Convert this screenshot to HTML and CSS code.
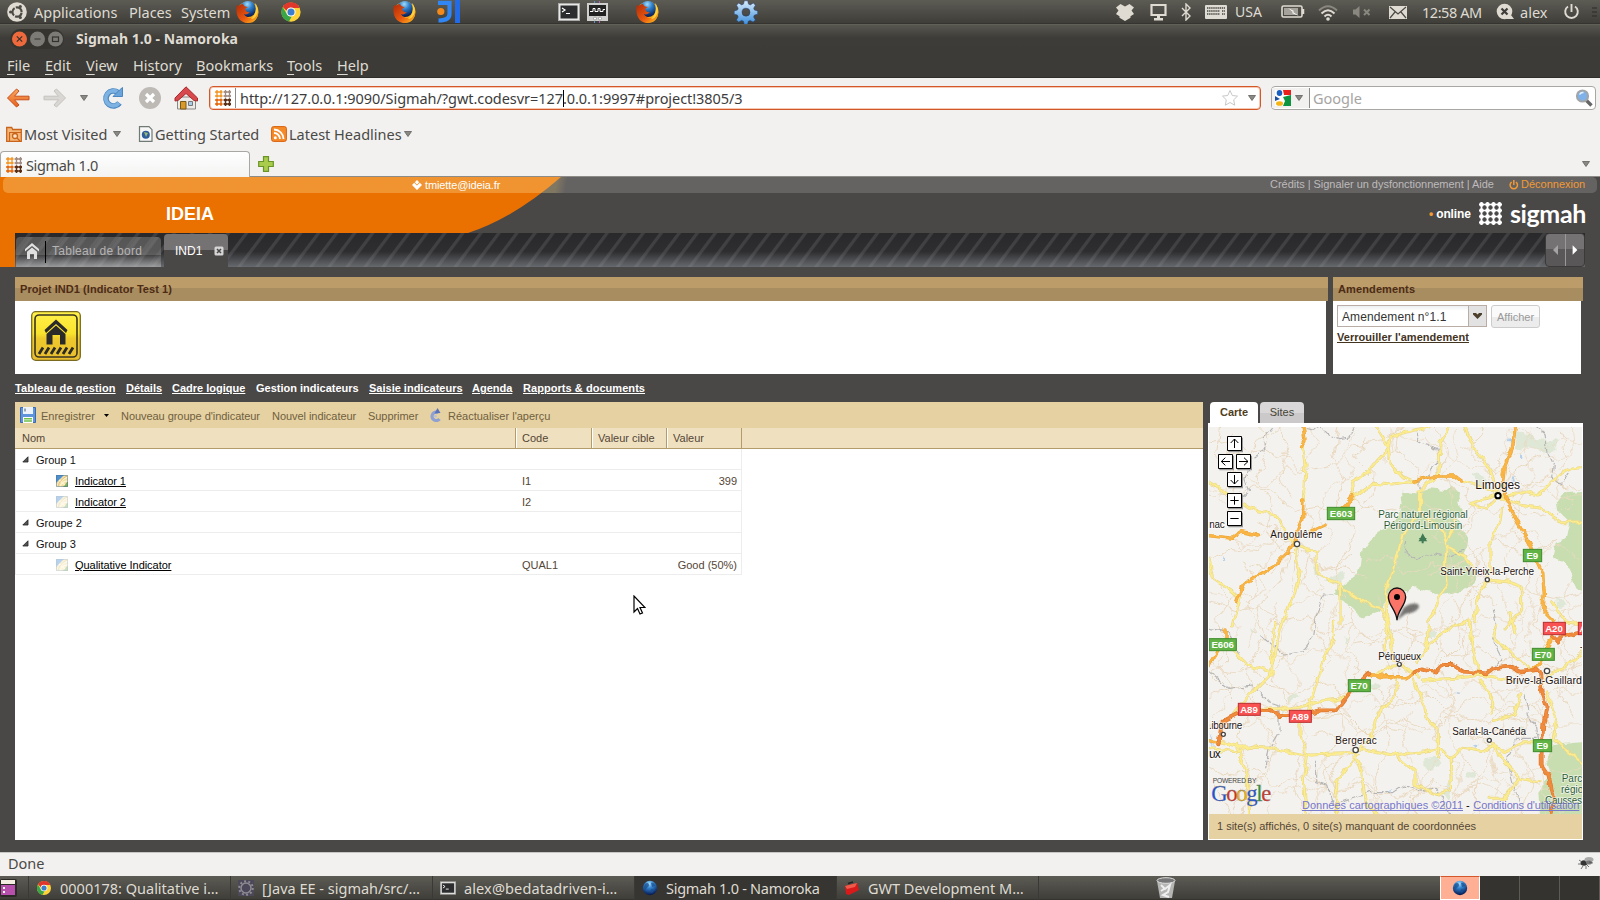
FILE: index.html
```html
<!DOCTYPE html>
<html lang="fr">
<head>
<meta charset="utf-8">
<title>Sigmah 1.0 - Namoroka</title>
<link rel="stylesheet" href="styles.css">
</head>
<body>
<svg class="defs" width="0" height="0">
  <defs>
    <radialGradient id="gBlue" cx=".45" cy=".2" r=".8"><stop offset="0" stop-color="#9fdcff"/><stop offset=".4" stop-color="#2f7fc9"/><stop offset="1" stop-color="#06164e"/></radialGradient>
    <linearGradient id="gFox" x1="0" y1="0" x2="1" y2="1"><stop offset="0" stop-color="#b02a08"/><stop offset=".55" stop-color="#e8560f"/><stop offset="1" stop-color="#ffc21e"/></linearGradient>
    <linearGradient id="gArrow" x1="0" y1="0" x2="0" y2="1"><stop offset="0" stop-color="#f8a860"/><stop offset="1" stop-color="#e8601c"/></linearGradient>
    <linearGradient id="gSign" x1="0" y1="0" x2="0" y2="1"><stop offset="0" stop-color="#fff04a"/><stop offset=".45" stop-color="#fae32c"/><stop offset=".55" stop-color="#eec92c"/><stop offset="1" stop-color="#e9bd2e"/></linearGradient>
    <linearGradient id="gGear" x1="0" y1="0" x2="0" y2="1"><stop offset="0" stop-color="#d9ecfb"/><stop offset="1" stop-color="#3d8fdc"/></linearGradient>
    <filter id="wiggle" filterUnits="userSpaceOnUse" x="0" y="60" width="1180" height="1230"><feTurbulence type="fractalNoise" baseFrequency=".02" numOctaves="3" seed="4" result="n"/><feDisplacementMap in="SourceGraphic" in2="n" scale="44" xChannelSelector="R" yChannelSelector="G"/></filter>
    <filter id="wiggleSoft" filterUnits="userSpaceOnUse" x="0" y="60" width="1180" height="1230"><feTurbulence type="fractalNoise" baseFrequency=".035" numOctaves="2" seed="9" result="n"/><feDisplacementMap in="SourceGraphic" in2="n" scale="20" xChannelSelector="R" yChannelSelector="G"/></filter>
    <filter id="soft" x="-20%" y="-60%" width="140%" height="220%"><feGaussianBlur stdDeviation="3"/></filter>
  </defs>
  <symbol id="fox" viewBox="0 0 24 24">
    <circle cx="13" cy="12" r="10.6" fill="#f8a91c"/>
    <circle cx="13" cy="9" r="8" fill="url(#gBlue)"/>
    <path d="M2 5c-2 8 1 18 11 18 6 0 10-4 10-10-1 3-4 5-7 5-4 0-6-2-7-4 2 1 4 0 6-2-3 1-4-1-5-3l3-2C10 7 9 6 8 4 6 4 5 5 4 6z" fill="url(#gFox)"/>
    <path d="M20 3c3 3 4 9 1 13-1 2-3 3-5 3 4-3 6-9 4-16z" fill="#ffd23c"/>
  </symbol>
  <symbol id="chrome" viewBox="0 0 24 24">
    <circle cx="12" cy="12" r="10.5" fill="#ffd338"/>
    <path d="M3 6.500A10.500 10.500 0 0 1 21.500 7.500H12a5 5 0 0 0-4.700 3.200z" fill="#e0362c"/>
    <path d="M2.900 6.600 7.600 14.500a5 5 0 0 0 5.200 2.400L9.800 22.300A10.500 10.500 0 0 1 2.900 6.600z" fill="#3aa648"/>
    <circle cx="12" cy="12" r="5" fill="#fff"/><circle cx="12" cy="12" r="3.900" fill="#3b7ed0"/>
  </symbol>
  <symbol id="term" viewBox="0 0 22 18">
    <rect x=".5" y=".5" width="21" height="17" fill="#e8e8e6" stroke="#aaa"/>
    <rect x="2.500" y="2.500" width="17" height="13" fill="#2b2d2e"/>
    <path d="M4 5l3 2-3 2M8 10.500h4" stroke="#fff" stroke-width="1.200" fill="none"/>
  </symbol>
  <symbol id="globe" viewBox="0 0 16 16">
    <circle cx="8" cy="8" r="7.200" fill="url(#gBlue)"/>
    <path d="M3 4c2-2 4-1 4 1s-2 2-3 4-2-1-2-2zM9 3c2-1 4 1 4 3l-3 1zM9 9c2 0 3 1 2 3s-2 1-2-1z" fill="#1b4f8f" opacity=".75"/>
  </symbol>
  <symbol id="down" viewBox="0 0 8 6"><path d="M.5.5h7L4 5.500z" fill="#8a8984" stroke="#5f5e5a" stroke-width=".8"/></symbol>
  <symbol id="sig" viewBox="0 0 16 16">
    <g stroke-width="1.300" fill="none">
      <path d="M0 2h7.500M0 6h7.500M2 0v7.500M6 0v7.500" stroke="#f39a2c"/>
      <path d="M8.500 2H16M8.500 6H16M10.500 0v7.500M14.500 0v7.500" stroke="#a08a80"/>
      <path d="M0 10h7.500M0 14h7.500M2 8.500V16M6 8.500V16" stroke="#e56a10"/>
      <path d="M8.500 10H16M8.500 14H16M10.500 8.500V16M14.500 8.500V16" stroke="#5a2c14"/>
    </g>
    <g fill="#f39a2c"><circle cx="2" cy="2" r="1.300"/><circle cx="6" cy="2" r="1.300"/><circle cx="2" cy="6" r="1.300"/><circle cx="6" cy="6" r="1.300"/></g>
    <g fill="#a08a80"><circle cx="10.500" cy="2" r="1.200"/><circle cx="14.500" cy="2" r="1.200"/><circle cx="10.500" cy="6" r="1.200"/><circle cx="14.500" cy="6" r="1.200"/></g>
    <g fill="#e56a10"><circle cx="2" cy="10" r="1.300"/><circle cx="6" cy="10" r="1.300"/><circle cx="2" cy="14" r="1.300"/><circle cx="6" cy="14" r="1.300"/></g>
    <g fill="#5a2c14"><circle cx="10.500" cy="10" r="1.500"/><circle cx="14.500" cy="10" r="1.500"/><circle cx="10.500" cy="14" r="1.500"/><circle cx="14.500" cy="14" r="1.500"/></g>
  </symbol>
  <symbol id="site" viewBox="0 0 12 12">
    <rect width="12" height="12" fill="#f0dfa0"/><path d="M0 0h8L0 8z" fill="#4f8fd0"/><path d="M12 6v6H7z" fill="#7fb05a"/>
    <path d="M1 12C2 8 6 4 12 2M4 12c1-4 4-6 8-6M3 5l6 5" fill="none" stroke="#fdf3cf" stroke-width="1.300"/><path d="M2 11C3 7 6 4 11 1" fill="none" stroke="#d9a860" stroke-width=".7"/><path d="M.5.5h11v11H.5z" fill="none" stroke="#4a7090" stroke-width=".7" opacity=".7"/>
  </symbol>
  <symbol id="house" viewBox="0 0 14 16"><path d="M0 8.500V6l7-6 7 6v2.500L7 3z"/><path d="M2 8.800 7 4.600l5 4.200V16H9v-5H5v5H2z"/></symbol>
  <symbol id="twist" viewBox="0 0 7 7"><path d="M6 .8V6H.8z" fill="#555" stroke="#222" stroke-width=".8"/></symbol>
</svg>

<header class="panel">
  <svg class="i20" viewBox="0 0 20 20"><circle cx="10" cy="10" r="9.800" fill="#dfdbd2"/><circle cx="10" cy="10" r="4.600" fill="none" stroke="#4b4a45" stroke-width="2.200" stroke-dasharray="8.400 1.230" stroke-dashoffset="-.6"/><g fill="#4b4a45"><circle cx="3.600" cy="10" r="1.600"/><circle cx="13.300" cy="4.500" r="1.600"/><circle cx="13.300" cy="15.500" r="1.600"/></g></svg>
  <span>Applications</span><span>Places</span><span>System</span>
  <svg class="i24"><use href="#fox"/></svg>
  <svg class="i22"><use href="#chrome"/></svg>
  <svg class="i24"><use href="#fox"/></svg>
  <svg class="i24" viewBox="0 0 24 24"><circle cx="3.800" cy="11.500" r="3.600" fill="#f58a1c"/><path d="M1 2.800h11.500V14c0 4.500-4 6.500-11 6.500" fill="none" stroke="#2f86f4" stroke-width="4.200"/><path d="M20.500 0v23" stroke="#1f6bea" stroke-width="5"/></svg>
  <svg class="term"><use href="#term"/></svg>
  <svg class="i24" viewBox="0 0 24 24"><path d="M8.500 1v22" stroke="#5a90d0"/><path d="M13.500 1v22" stroke="#a860b0"/><rect x="1" y="3" width="21" height="18" fill="#cfcfcd"/><rect x="3" y="5" width="17" height="11" fill="#222"/><path d="M4 11.500h3v-3h2v3h3v-3h2v3h3v-2h2" stroke="#fff" fill="none"/><circle cx="9" cy="18.500" r="1.500" fill="#fff" stroke="#666" stroke-width=".5"/><circle cx="14" cy="18.500" r="1.500" fill="#fff" stroke="#666" stroke-width=".5"/></svg>
  <svg class="i24"><use href="#fox"/></svg>
  <svg class="i24" viewBox="0 0 24 24"><path d="M10.300.8h3.400l.8 3.300 1.800.8 3-1.900 2.100 2.200-1.700 3 .8 1.900 3.200.8v3.300l-3.200.8-.9 2 1.800 2.900-2.300 2.200-2.900-1.700-1.900.8-.7 3.100h-3.400l-.7-3.100-1.900-.8-2.900 1.700-2.300-2.200L4.200 17l-.9-2-3.100-.8v-3.300l3.200-.8.8-1.900-1.700-3 2.200-2.200 3 1.900 1.800-.8zM12 8.200a4 4 0 1 0 0 8 4 4 0 0 0 0-8z" fill="url(#gGear)" fill-rule="evenodd" stroke="#1e3f78" stroke-width=".5"/></svg>
  <svg class="i20" viewBox="0 0 20 20"><path d="M5.500 2 10 4.500 14.500 2 19 5.500 16.500 8.500 19 12l-3.500 2.200v1.600L10 19l-5.500-3.200v-1.600L1 12l2.500-3.500L1 5.500z" fill="#dfdbd2"/></svg>
  <svg class="i20" viewBox="0 0 20 20"><path d="M2.500 3h14v10h-14z" fill="none" stroke="#dfdbd2" stroke-width="2.200"/><path d="M8 14h3v2h3v2.500H5V16h3z" fill="#dfdbd2"/></svg>
  <svg class="bt" viewBox="0 0 12 18"><path d="M2 5l8 8-4 4V1l4 4-8 8" fill="none" stroke="#dfdbd2" stroke-width="1.400"/></svg>
  <svg class="kb" viewBox="0 0 22 14"><rect width="22" height="14" rx="1" fill="#dedbd5"/><path d="M2 3h18M2 6h13M2 9h13M17 6h3M17 9h3" stroke="#6a6862" stroke-width="1.800" stroke-dasharray="1.400 .7"/></svg>
  <span class="usa">USA</span>
  <svg class="bat" viewBox="0 0 24 14"><rect x="1" y="1" width="20" height="11" rx="1.500" fill="none" stroke="#dfdbd2" stroke-width="1.600"/><path d="M22 4v5" stroke="#dfdbd2" stroke-width="2.500"/><path d="M3 3h14v7H3z" fill="#a5a29b"/><path d="M7 3l6 3-1 1 6 4-7-3 1-1z" fill="#fff"/></svg>
  <svg class="i20" viewBox="0 0 20 20"><g fill="none" stroke-width="2"><path d="M1 8.500Q10 0 19 8.500" stroke="#8a8780"/><path d="M3.500 11.500Q10 5 16.500 11.500M6.500 14.500Q10 11 13.500 14.500" stroke="#dfdbd2"/></g><circle cx="10" cy="17" r="1.800" fill="#dfdbd2"/></svg>
  <svg class="i18" viewBox="0 0 18 18"><path d="M0 6.500h2.500L6.500 3v12l-4-3.500H0z" fill="#8a8780"/><path d="M11 6.500l5.500 5.500M16.500 6.500L11 12" stroke="#8a8780" stroke-width="2"/></svg>
  <svg class="mail" viewBox="0 0 18 13"><rect width="18" height="13" fill="#dfdbd2"/><path d="M1 1l8 7 8-7M1 12l5-6M17 12l-5-6" fill="none" stroke="#4b4a45" stroke-width="1.200"/></svg>
  <span class="clock">12:58 AM</span>
  <svg class="i18" viewBox="0 0 18 18"><circle cx="8.500" cy="8.500" r="7.800" fill="#dfdbd2"/><path d="M10 16h8l-3-4z" fill="#dfdbd2"/><path d="M5.500 5.500l6 6M11.500 5.500l-6 6" stroke="#3f3e3a" stroke-width="2.200"/></svg>
  <span>alex</span>
  <svg class="i18" viewBox="0 0 18 18"><path d="M5 3.500a6.300 6.300 0 1 0 7 0M8.500 1v8" fill="none" stroke="#dfdbd2" stroke-width="1.900"/></svg>
  <svg class="grip" viewBox="0 0 5 10"><path d="M0 1h5M0 5h5M0 9h5" stroke="#2c2b28"/></svg>
</header>

<div class="titlebar">
  <svg class="wbtns" viewBox="0 0 54 20"><rect x="0" y="0" width="54" height="20" rx="10" fill="#35342f"/><circle cx="9.500" cy="10" r="7.500" fill="#ee6a3c"/><circle cx="27.500" cy="10" r="7.500" fill="#7c7b75"/><circle cx="45.500" cy="10" r="7.500" fill="#7c7b75"/><g fill="none" stroke="#33322e" stroke-width="1.200"><path d="M6.800 7.300l5.400 5.400M12.200 7.300l-5.400 5.400M24.500 10h6"/><rect x="42.500" y="8" width="6" height="4.500"/></g></svg>
  <span>Sigmah 1.0 - Namoroka</span>
</div>
<nav class="menubar"><span><u>F</u>ile</span><span><u>E</u>dit</span><span><u>V</u>iew</span><span>Hi<u>s</u>tory</span><span><u>B</u>ookmarks</span><span><u>T</u>ools</span><span><u>H</u>elp</span></nav>

<div class="navbar">
  <svg class="i24" viewBox="0 0 24 24"><path d="M1.500 12 10.500 3l2.500 2-4.500 5.200H23v3.600H8.500L13 19l-2.500 2z" fill="url(#gArrow)" stroke="#c8501a" stroke-linejoin="round"/></svg>
  <svg class="i24" viewBox="0 0 24 24"><path d="M22.500 12 13.500 3 11 5l4.500 5.200H1v3.600h14.500L11 19l2.500 2z" fill="#d9d7d3" stroke="#c6c3be" stroke-linejoin="round"/></svg>
  <svg class="dn"><use href="#down"/></svg>
  <svg class="i24" viewBox="0 0 24 24"><path d="M17 6.500A7.500 7.500 0 1 0 18.500 17" fill="none" stroke="#4a86c0" stroke-width="5.600"/><path d="M17 6.500A7.500 7.500 0 1 0 18 17" fill="none" stroke="#7db2e2" stroke-width="3.800"/><path d="M12 10.500h9.500V1.500l-3 2.500z" fill="#6ba4da" stroke="#4a86c0"/></svg>
  <svg class="i24" viewBox="0 0 24 24"><circle cx="12" cy="12" r="11" fill="#bdbab6"/><path d="M8 8l8 8M16 8l-8 8" stroke="#fff" stroke-width="3.200"/></svg>
  <svg class="i24" viewBox="0 0 24 24"><path d="M3.500 11h18v12h-18z" fill="#ecebe8" stroke="#8a8884"/><path d="M12 .8 1 12v3l3-.5 8-7 8 7 3.500.5v-3z" fill="#d8484c" stroke="#a52a2c"/><path d="M6.500 15.500h5.500V23H6.500z" fill="#d99a2a" stroke="#7a5a1a"/><path d="M14.500 15.500h4v4h-4z" fill="#a9cce8" stroke="#777"/></svg>
  <div class="urlbar">
    <svg class="i16"><use href="#sig"/></svg><i class="vsep"></i>
    <span class="url">http://127.0.0.1:9090/Sigmah/?gwt.codesvr=127<i class="caret"></i>.0.0.1:9997#project!3805/3</span>
    <svg class="i18 star" viewBox="0 0 18 18"><path d="M9 1.500l2.300 5 5.200.6-3.800 3.700 1 5.400L9 13.500l-4.700 2.700 1-5.400L1.500 7.100l5.200-.6z" fill="#fff" stroke="#c8c8c8"/></svg>
    <svg class="dn"><use href="#down"/></svg>
  </div>
  <div class="search">
    <div class="engine">
      <svg class="i16" viewBox="0 0 16 16"><rect width="16" height="16" fill="#fff"/><path d="M8 0h8v5H9z" fill="#e8211d"/><path d="M16 5v11H8l2-5-2-4z" fill="#0d9440"/><ellipse cx="4.500" cy="3" rx="2.800" ry="3" fill="#1a60c0"/><path d="M0 6l5 3-5 2z" fill="#1c4fa0"/><ellipse cx="4.500" cy="13.500" rx="3.500" ry="2.300" fill="#f5b414"/></svg>
      <svg class="dn"><use href="#down"/></svg>
    </div>
    <span>Google</span>
    <svg class="i18" viewBox="0 0 18 18"><path d="M11 11l5.500 5.500" stroke="#666" stroke-width="3.400"/><circle cx="7.500" cy="7" r="5.600" fill="#7fb2e8" stroke="#a3a6a8" stroke-width="2"/><path d="M4.500 5.500a4 4 0 0 1 4-2" stroke="#e5f2ff" stroke-width="1.500" fill="none"/></svg>
  </div>
</div>

<div class="bookmarks">
  <svg class="i16" viewBox="0 0 16 16"><path d="M.7 1.500h5l1 2h8.600v11.800H.7z" fill="#f6b878" stroke="#c8641c" stroke-width="1.300"/><path d="M3 6.500h12" stroke="#c8641c"/><circle cx="9" cy="10" r="2.500" fill="#fbe3c8" stroke="#c8641c" stroke-width="1.300"/><path d="M11 12l3 3M3.500 6.500V15" stroke="#c8641c" stroke-width="1.200"/></svg>
  <span class="b1">Most Visited</span><svg class="dn"><use href="#down"/></svg>
  <svg class="i16" viewBox="0 0 16 16"><path d="M1.500.7H11l3 3v11.600H1.500z" fill="#f6f7f6" stroke="#6f7a74" stroke-width="1.200"/><circle cx="7.800" cy="8.700" r="4" fill="#2d5b9c"/><path d="M6 6l4 1-2 4z" fill="#9ab870"/></svg>
  <span class="b2">Getting Started</span>
  <svg class="i16" viewBox="0 0 16 16"><rect x=".6" y=".6" width="14.800" height="14.800" rx="2" fill="#f58a28" stroke="#d8620e"/><circle cx="4.300" cy="11.700" r="1.500" fill="#fff"/><path d="M3 7a6 6 0 0 1 6 6M3 3.500a9.500 9.500 0 0 1 9.500 9.500" fill="none" stroke="#fff" stroke-width="1.800"/></svg>
  <span class="b3">Latest Headlines</span><svg class="dn"><use href="#down"/></svg>
</div>
<div class="tabs">
  <div class="tab"><svg class="i16"><use href="#sig"/></svg><span>Sigmah 1.0</span></div>
  <div class="tabrest"><svg class="i16" viewBox="0 0 16 16"><path d="M5.500.7h5v4.800h4.800v5h-4.800v4.800h-5v-4.800H.7v-5h4.800z" fill="#a9cc4c" stroke="#6b9426" stroke-width="1.200"/></svg><svg class="dn"><use href="#down"/></svg></div>
</div>

<main class="app">
  <div class="banner">
    <svg class="swoosh" viewBox="0 0 570 56"><path d="M0 0h561Q514 41 468 56H0z" fill="#ea7000"/></svg>
    <div class="strip">
      <svg class="i10" viewBox="0 0 10 10"><path d="M5 0l2.200 2.200L5 4.400 2.800 2.200zM2.200 2.800 4.400 5 5 5.600 5.600 5l2.200-2.200L10 5 5 10 0 5z" fill="#fff"/></svg>
      <span class="mailaddr">tmiette@ideia.fr</span>
      <span class="links">Crédits | Signaler un dysfonctionnement | Aide</span>
      <svg class="i10" viewBox="0 0 10 10"><path d="M2.700 2a3.700 3.700 0 1 0 4.200 0M4.800 0v5" fill="none" stroke="#f39a33" stroke-width="1.500"/></svg>
      <span class="logout">Déconnexion</span>
    </div>
    <div class="brand">
      <b class="org">IDEIA</b>
      <span class="online"><i>•</i> online</span>
      <svg class="grid9" viewBox="0 0 23 23"><path d="M0 2.500h23M0 8.500h23M0 14.500h23M0 20.500h23M2.500 0v23M8.500 0v23M14.500 0v23M20.500 0v23" stroke="#fff" stroke-width="1.700"/><path d="M2.500 2.500h18.100M2.500 8.500h18.100M2.500 14.500h18.100M2.500 20.500h18.100" fill="none" stroke="#fff" stroke-width="4.600" stroke-linecap="round" stroke-dasharray="0 6"/></svg>
      <span class="sigmah">sigmah</span>
    </div>
  </div>
  <div class="worktabs">
    <div class="wt home"><svg class="house"><use href="#house"/></svg><i></i><span>Tableau de bord</span></div>
    <div class="wt cur"><span>IND1</span><svg class="i10" viewBox="0 0 10 10"><rect x=".5" y=".5" width="9" height="9" rx="1.500" fill="#d5d5d5"/><path d="M3 3l4 4M7 3L3 7" stroke="#4a4747" stroke-width="1.500"/></svg></div>
    <div class="scroll"><svg viewBox="0 0 19 32"><path d="M12 11v10l-5-5z" fill="#a5a3a3"/></svg><svg viewBox="0 0 19 32"><path d="M7 11v10l5-5z" fill="#fff"/></svg></div>
  </div>

  <div class="toprow">
    <section><h2>Projet IND1 (Indicator Test 1)</h2>
      <div class="body proj"><svg viewBox="0 0 50 50"><rect x=".7" y=".7" width="48.600" height="48.600" rx="4" fill="url(#gSign)" stroke="#7a6a20" stroke-width="1.300"/><rect x="4" y="4" width="42" height="42" rx="4" fill="none" stroke="#3a3420" stroke-width="1.600"/><path d="M13.500 19 25 8.500 36.500 19l-1.500 3-10-9-10 9z" fill="#2b2a2a"/><path d="M15.500 23 25 14.500 34.500 23v10.500H29V24h-7.500v9.500h-6z" fill="#2b2a2a"/><path d="M8 43l4-6.500M14 43l4-6.500M20 43l4-6.500M26 43l4-6.500M32 43l4-6.500M38 43l4-6.500" stroke="#2b2a2a" stroke-width="2.800"/></svg></div>
    </section>
    <section class="amend"><h2>Amendements</h2>
      <div class="body"><div class="line"><div class="combo"><span>Amendement n°1.1</span><b><svg viewBox="0 0 9 6"><path d="M0 0h3l1.500 1.500L6 0h3v1.500L4.500 6 0 1.500z" fill="#4b3f2c"/></svg></b></div><div class="btn">Afficher</div></div><a>Verrouiller l'amendement</a></div>
    </section>
  </div>

  <nav class="sub"><a class="w1">Tableau de gestion</a><a>Détails</a><a>Cadre logique</a><a class="on">Gestion indicateurs</a><a>Saisie indicateurs</a><a>Agenda</a><a class="w2">Rapports &amp; documents</a></nav>

  <div class="work">
    <section class="gridpanel">
      <div class="toolbar">
        <svg class="i16" viewBox="0 0 16 16"><path d="M.5.5h15v15H.5z" fill="#5f94dc" stroke="#3c68ae"/><path d="M3 0h10v7H3z" fill="#eef3fb"/><path d="M5 1.500v3" stroke="#456" stroke-width="1"/><path d="M3 10h10v6H3z" fill="#fff"/><path d="M4 11.800h8M4 14h8" stroke="#6fbf48" stroke-width="1.400"/></svg>
        <span>Enregistrer</span><svg class="tri" viewBox="0 0 5 3"><path d="M0 0h5L2.500 3z"/></svg>
        <span class="tight">Nouveau groupe d'indicateur</span><span class="tight">Nouvel indicateur</span><span class="tight">Supprimer</span>
        <svg class="ref" viewBox="0 0 12 14"><path d="M9 4.500A4.200 4.200 0 1 0 10.500 11" fill="none" stroke="#8fa0d2" stroke-width="3.200"/><path d="M5.500 5.500 11.500 5 8.500 0z" fill="#5a72b8"/><circle cx="6.500" cy="8.300" r="1.300" fill="#b9c1d8"/></svg>
        <span>Réactualiser l'aperçu</span>
      </div>
      <div class="row head"><span>Nom</span><span>Code</span><span>Valeur cible</span><span>Valeur</span></div>
      <div class="row"><span class="g"><svg><use href="#twist"/></svg>Group 1</span></div>
      <div class="row"><span class="n"><svg><use href="#site"/></svg><u>Indicator 1</u></span><span>I1</span><span></span><span class="r">399</span></div>
      <div class="row"><span class="n dim"><svg><use href="#site"/></svg><u>Indicator 2</u></span><span>I2</span></div>
      <div class="row"><span class="g"><svg><use href="#twist"/></svg>Groupe 2</span></div>
      <div class="row"><span class="g"><svg><use href="#twist"/></svg>Group 3</span></div>
      <div class="row"><span class="n dim"><svg><use href="#site"/></svg><u>Qualitative Indicator</u></span><span>QUAL1</span><span></span><span class="r">Good (50%)</span></div>
    </section>
    <section class="side">
      <div class="mtabs"><b>Carte</b><span>Sites</span></div>
      <div class="mapbox">
      <svg class="map" viewBox="27 96 1119 1161">
        <rect x="27" y="96" width="1119" height="1161" fill="#f4f2ee"/>
        <g fill="#dfe8d6" filter="url(#wiggle)">
          <path d="M940 115l50 5 70 20 10 30-40 10-40-20-45-10zM820 240l40 10 10 25-40 5zM380 555l50-30 10 30-40 20zM670 1090l40-5 15 20-30 20-25-10zM500 880l20-20 20 15-15 20zM270 900l20-15 10 25-25 5zM740 1150l15 20-10 40-20-10zM690 710l25 0-10 25-20 0zM900 750l20-10 0 25zM960 1000l25 5-10 20zM1070 600l20 30-15 10zM340 520l25 5-5 15-20 0zM240 940l20 5-10 20zM430 720l15 10-10 15zM800 1130l20 5-5 20-15-5zM560 700l20 5-10 15zM150 700l20 10-15 10z"/>
        </g>
        <g fill="#c9deb0" filter="url(#wiggleSoft)">
          <path d="M600 290l50 5 40-15 50 5 15-13 25 23-5 35 15 20-20 20 15 25 20 35-5 30-10 20 20 40 20 20-10 35-40 15-60 10-30-10-50-15-20 15-20-10-20 20-10-10-10 20-20 40-60 20-20-30-30-25-30-20 40-35 25-10 15-40 5-50 25-10 20-40 30-10 30-30 15-40z"/>
          <path d="M1160 290l-70 5-20 25 5 30 35 35-10 45-30 10-10 50 30 10 20 20 20 65 30 10z"/>
          <path d="M1160 1040l-100 10-20 40 10 40-20 40-15 20 5 80h140z"/>
        </g>
        <g fill="#b4d0ea" filter="url(#wiggle)"><path d="M930 130l5 15-10 0zM960 165l8 20-8-5zM940 240l5 20-8 0zM28 1010l20 40-10-5zM80 470l5 20-8-5zM995 780l12 5-8 5zM760 880l12 10-10 2zM560 1190l30-5-10 8zM820 1045l20 4-15 6z"/></g>
        <g filter="url(#wiggle)" fill="none" stroke="#ead9c1" stroke-width="3">
          <g id="lanes">
          <path d="M0 150l87-20 50 40 70-10 60 30 40 40 90-20 60-60 90-10 60-40M10 300l90 10 60-40 70 20 50 60 70-20 60 40 70-30M0 500l90-40 80 10 60-60 70 30 50 80 90-10 60 40"/>
          <path d="M180 70l20 106-30 70 50 80-20 90 60 70-20 80-70 60 20 110-50 90 30 100-60 90 40 120-20 140M420 76l-20 110 40 60-30 90 60 80-50 80-20 90 60 60-20 110 40 70-60 90 10 100-50 80 30 140"/>
          <path d="M600 76l-10 90 60 50 10 70M700 76l40 90-20 80 70 30 30 80-40 60 60 80-30 80 90 60M860 76l-40 80 60 80 40-20 50 60 80-30 40 40 86-10M960 340l-30 70 60 50 90-20M880 440l60 10 50 80-10 60 80 20 106-20"/>
          <path d="M0 620l107 30 70-20 60 50 90-20 40 60 80-30 90 50 70-40 80 20 60 60 90-20 60 40 90-30 80 60 110-20M0 790l87 40 70-10 50 60 80 10 90-30 60 50 60-40 100 60 90-30 50 50 110-40 60 40 90-20 50 60 120 0"/>
          <path d="M0 900l107-20 90 60 60-20 80 50 110-10 60 60 90-50 100 40 70-60 110 40 60-30 120 40M0 1110l97 30 80-20 50 60 90-40 80 60 90-30 100 40 110-60 70 50 90-30 110 40M100 1277l10-90 80-40 40-100-30-50M560 1277l-40-130 50-110-30-90 60-60-40-90M640 1277l20-130 60-60-20-80 60-90-40-110 60-60-30-90M850 1277l-40-100 60-70-20-90 60-80-30-90 60-100-20-70M960 1277l40-130-50-70 40-100 60-60"/>
          <path d="M60 76l-10 100 70 50-20 80M240 90l-70 40-30 60-80-10M500 130l-40 60 60 60-10 60-60 50M330 480l-20 80 60 60-30 80 50 80M60 560l30 50-40 70 50 90-60 80 60 60M230 610l-30 90 50 80-30 90 60 50M640 610l-20 90 50 60M760 620l40 80-20 90 60 60M1040 620l-40 60 30 80M1090 640l-30 70 60 90-40 90 50 80M40 1170l60 100M300 1080l-20 90 40 100M420 1090l-30 70 50 110M700 1150l-60 60 10 67M790 1080l40 70-20 120M1080 110l20 80-40 60 60 70-60 60M980 400l60 60 40-20M130 500l40 60-30 80M220 76l40 80-20 90 40 60"/>
          </g>
          <use href="#lanes" transform="translate(1175 0) scale(-1 1)" opacity=".75"/>
          <path d="M470 310l60 40 70-10 60 40 80-10 60 40M500 500l70-20 40 60 90-40 60 20 90-60M290 460l50-80-20-60M290 460l80 60 80-30M290 460l-80 70-60-20M290 460l-70-60-60-20M290 460l-20 80 20 60M890 300l70-90 60-20M890 300l90 60 60-10M890 300l-40-90-60-60M890 300l-70 70-20 60M860 550l-60 50-50 90M860 550l60 60 20 90M860 550l-70-30M600 810l-60-70-80 10M600 810l50-90 90-20M600 810l-20 90-60 40M465 1060l-70-50-60 10M465 1060l90-60 60 10M465 1060l-90 70-10 70M868 1035l60-60 70 10M868 1035l-90-30M868 1035l20 90 70 30"/>
        </g>
        <g class="border" filter="url(#wiggleSoft)">
          <path d="M300 96l40 10 20-10 25 25 35 10 30-5 15-30M215 96l-25 30 5 40-40 30-20 60 10 30-30 30M650 110l0 30 60 20 10 30-20 30-40 40 0 20M1010 96l25 20 10 60 15 30-5 40 30 20 20-30M620 440l-5 30 30 25 50-20 50 10 50-20M400 600l-30 0-20 60-10 70-30 40-60 10-70-60M27 700l60 10 30 70M27 830l60 50 70-10 50 50 30 10 0 80-30 50-10 60M880 640l10 60-15 30 30 60-20 30M975 900l10 60 25 40 10 60M350 1100l0 60 30 10 20 60 90-30 20-10 70 0 30-20 60 20 40-10 20 40 30 60M1010 1030l-60 0-30 60 20 80 20 50"/>
        </g>
        <g class="roads" filter="url(#wiggleSoft)">
          <g id="yl">
          <path d="M307 150l8 60-5 110M520 86l45 70 5 50 40 40 40 15M565 160l-60 70-50 30 5 50M690 96l-50 10-70 20-5 30M455 310l65-45 60 5 70-10M790 86l30 70 50 70 20 60M755 86l-35 55-3 90-30 30-30 30 0 60-50 70-20 80-30 95 5 110-10 60"/>
          <path d="M890 290l-60-20-40-10M890 300l-60 20-20 5 50 15 30-30M910 305l70-15 35 10 60-60 40-20 45-8M900 310l60 20 60 10 60 40 80 0M905 340l-5 40-30 60 0 90-10 30-30 60-5 60M660 300l0 50 70 60 10 40-5 60 5 60-20 30-20 60-20 20M740 440l20-40 0-30M745 455l50 30 20 30M860 555l60 5 45 15 0 70-50 60"/>
          <path d="M10 250l77 50 60 40 80 20 30 50 20 40M27 490l10 60 60 40 20 20M290 450l60 20 5 70 60 30 70 50 60 20 10 20M290 460l0 40 10 30-15 60-40 100-20 90-20 60M420 570l0 120M120 610l-20 80M400 675l0 60-30 60-40 130-10 30"/>
          <path d="M80 750l60 60 70 20M215 830l0-70 10-75M220 830l-60 60-40 40-20 25M185 943l110-5 70-20 50-5 30-15M565 675l10 80 5 40M685 690l-5 70-30 40M680 755l60-50 60-25M810 675l5 70 20 90M640 855l30 70 5 40 40 40 0 80M670 855l100-5 70-10 100 15M590 850l-5 60-50 40-20 80-40 30M300 965l0 60 20 50-10 80 10 112M315 1080l-90-20-110-5-60-15M110 1050l30 90 10 127M325 1080l150-5M470 1080l-60 80 0 100M465 1070l20 60 10 90 40 47M480 1060l100 20 90-10 50-10 30 30 40-30 60 10 30-20M585 1080l60 50 0 40 70 30 30-10M750 1085l5 100M870 1040l40 30 60-30 60 0M880 1050l30 50 50 50 60 10M960 1150l-50 60-40 0M840 855l35 50 0 50M880 980l60-20 20-60"/>
          <path d="M890 690l-10 40 70 60 50 40M1040 840l50-20 70-60M930 655l15 60M1040 890l30 80-10 60 70 60 30 30M1055 620l40 60 70 10"/>
          <path d="M530 835l40-20 30-5 60 35M20 1060l90 10 60-20"/>
          </g>
          <use href="#yl" class="core"/>
        </g>
        <g class="roads highway" filter="url(#wiggleSoft)">
          <g id="hw"><path d="M307 80l8 51-10 20M308 315l0 60-20 50-20 40-50 50-55 30M160 545l-30 20-10 30-10 25M948 76l-10 80-25 60-5 40 5 40 15 40 50 90 50 110 5 60-5 50 30 30 0 50-40 80-25 20M645 258l50-15 70 0 20 15M10 420l87 10 30-20 45 10M330 410l45-20M430 340l28-35M78 705l0 20-60 100M10 1037l47 8M500 840l40 0 0 5 80 0 20-10"/></g>
          <use href="#hw" class="core"/>
        </g>
        <g class="roads motorway" filter="url(#wiggleSoft)">
          <g id="mw"><path d="M55 1048l10-60 15-15 50-25 80 0 30 12 60 0 60-14 50 0 40-55 55-55M640 835l25-15 45 10 20-20 30 0 30 20 70 5 20-15 50-5 30 15 50-5M1010 820l10 10 5 60 15 40-10 60-5 60 0 60 20 30 15 60 0 30-35 100M1160 708l-74 17-15 15-15-15"/></g>
          <use href="#mw" class="core"/>
        </g>
        <g fill="#fff" stroke="#444" stroke-width="4">
          <circle cx="291" cy="447" r="8"/><circle cx="862" cy="554" r="6"/><circle cx="598" cy="808" r="6"/><circle cx="1041" cy="828" r="8"/><circle cx="70" cy="1018" r="6"/><circle cx="467" cy="1065" r="8"/><circle cx="868" cy="1036" r="6"/><circle cx="894" cy="302" r="8" stroke="#000" stroke-width="6"/>
        </g>
        <path d="M668 415l8 14 4 0-2 5 4 5h-11v6h-6v-6h-10l4-5-2-5h4z" fill="#3f7a55"/>
        <g class="shield grn">
          <rect x="382" y="337" width="82" height="37"/><rect x="970" y="463" width="55" height="37"/><rect x="27" y="731" width="82" height="36"/><rect x="445" y="854" width="66" height="36"/><rect x="997" y="760" width="66" height="36"/><rect x="1000" y="1034" width="55" height="36"/>
        </g>
        <g class="shield red">
          <rect x="115" y="925" width="66" height="36"/><rect x="268" y="946" width="66" height="36"/><rect x="1030" y="682" width="66" height="37"/><rect x="1135" y="682" width="20" height="37"/>
        </g>
        <g class="sht"><text x="423" y="366">E603</text><text x="997" y="492">E9</text><text x="68" y="759">E606</text><text x="477" y="883">E70</text><text x="1029" y="789">E70</text><text x="1027" y="1063">E9</text><text x="147" y="954">A89</text><text x="300" y="975">A89</text><text x="1062" y="711">A20</text><text x="1149" y="711">A</text></g>
        <g class="town">
          <text x="826" y="282" textLength="134" class="big">Limoges</text>
          <text x="211" y="430" textLength="156">Angoulême</text><text x="28" y="400" textLength="46">nac</text>
          <text x="721" y="541" textLength="281">Saint-Yrieix-la-Perche</text>
          <text x="535" y="796" textLength="128">Périgueux</text>
          <text x="917" y="867" textLength="229" class="mid">Brive-la-Gaillard</text>
          <text x="27" y="1003" textLength="100">.ibourne</text><text x="27" y="1088" textLength="35" class="big">ux</text>
          <text x="406" y="1047" textLength="124">Bergerac</text><text x="757" y="1020" textLength="221">Sarlat-la-Canéda</text>
          <text x="1140" y="780">T</text>
        </g>
        <g class="town park"><text x="535" y="370" textLength="268">Parc naturel régional</text><text x="551" y="403" textLength="236">Périgord-Limousin</text><text x="1085" y="1162">Parc</text><text x="1083" y="1195">régio</text><text x="1035" y="1227" textLength="111">Causses</text></g>
        <path d="M591 676l20-38q20-16 40-12 12 6 0 18-10 10-34 12z" fill="#222" opacity=".6" filter="url(#soft)"/>
        <path d="M591 676c-2-32-26-44-26-70a26 27 0 0 1 52 0c0 26-24 38-26 70z" fill="#fa7468" stroke="#111" stroke-width="4"/><circle cx="591" cy="606" r="9"/>
        <g fill="#999"><path d="M85 128h44v44H85zM58 182h44v44H58zM112 182h44v44h-44zM85 236h44v44H85zM85 299h44v44H85zM85 353h44v44H85z"/></g>
        <g fill="#fff" stroke="#000" stroke-width="3"><path d="M82.500 124.500h42v42h-42zM55.500 178.500h42v42h-42zM109.500 178.500h42v42h-42zM82.500 232.500h42v42h-42zM82.500 295.500h42v42h-42zM82.500 349.500h42v42h-42z"/></g>
        <g fill="none" stroke="#000" stroke-width="3"><path d="M103.500 159v-27M92 144l11.500-12L115 144M90 199.500H64M76 188l-12 11.500L76 211M117 199.500h27M132 188l12 11.500-12 11.500M103.500 240v27M92 255l11.500 12 11.500-12M91 316.500h25M103.500 304v25M91 370.500h25"/></g>
        <text x="38" y="1163" class="pow" textLength="131">POWERED BY</text>
        <text x="34" y="1217" class="ggl" textLength="180"><tspan fill="#1f52d8">G</tspan><tspan fill="#dc2f24">o</tspan><tspan fill="#eeb211">o</tspan><tspan fill="#1f52d8">g</tspan><tspan fill="#26963f">l</tspan><tspan fill="#dc2f24">e</tspan></text>
        <g class="copy"><text x="306" y="1242" textLength="483">Données cartographiques ©2011</text><text x="798" y="1242" class="dash">-</text><text x="820" y="1242" textLength="318">Conditions d'utilisation</text><path d="M306 1246.500h483M820 1246.500h318"/></g>
      </svg>
      <div class="mfoot">1 site(s) affichés, 0 site(s) manquant de coordonnées</div>
      </div>
    </section>
  </div>
  <svg class="cursor" viewBox="0 0 13 20"><path d="M1 1v16l3.500-3.500 2.500 5.500 2.500-1-2.500-5.500h5z" fill="#fff" stroke="#000" stroke-width="1.200"/></svg>
</main>

<div class="status"><span>Done</span><svg class="i16" viewBox="0 0 16 16"><ellipse cx="6" cy="8" rx="3.500" ry="2.800" fill="#333"/><ellipse cx="11" cy="4.500" rx="4.500" ry="2.600" fill="#aaa"/><ellipse cx="11" cy="7.500" rx="3" ry="2" fill="#777"/><path d="M1 5l3 2M0 9h3M3 14l2-3M8 14v-3M11 12l-2-2M15 8l-4-1" stroke="#555" stroke-width=".8"/></svg></div>
<footer class="taskbar">
  <svg class="i18" viewBox="0 0 18 18"><rect width="17" height="18" rx="2" fill="#2b2a27"/><path d="M1 1h14v4H1z" fill="#f4eee0"/><path d="M1 6h14v10H1z" fill="#b650ac"/><path d="M4 8v2M4 12v2" stroke="#fff" stroke-width="2"/></svg>
  <i class="hdl"></i>
  <div class="task"><svg class="i16"><use href="#chrome"/></svg><span>0000178: Qualitative i…</span></div>
  <div class="task"><svg class="i16" viewBox="0 0 16 16"><rect width="16" height="16" fill="#4c4759"/><circle cx="8" cy="8" r="5" fill="none" stroke="#8e8c92" stroke-width="1.500"/><circle cx="8" cy="8" r="6.800" fill="none" stroke="#8e8c92" stroke-width="2" stroke-dasharray="2 2.270"/></svg><span>[Java EE - sigmah/src/…</span></div>
  <div class="task"><svg class="i16"><use href="#term"/></svg><span class="t3">alex@bedatadriven-i…</span></div>
  <div class="task active"><svg class="i16"><use href="#globe"/></svg><span class="t4">Sigmah 1.0 - Namoroka</span></div>
  <div class="task"><svg class="i16" viewBox="0 0 16 16"><path d="M1 6l12-3 2 7-10 5-3-1z" fill="#d81a1a"/><path d="M1 6l12-3-2 4-8 2z" fill="#f05a4a"/><path d="M4 3.500l5-1.500" stroke="#222" stroke-width="1.500"/></svg><span>GWT Development M…</span></div>
  <svg class="trash" viewBox="0 0 20 22"><path d="M1 4h18l-3 17H4z" fill="#b5b5b3"/><ellipse cx="10" cy="3.500" rx="9" ry="2.800" fill="#777" stroke="#ddd"/><path d="M5 8l4 4 5-4-2 7-5 3 6 2M5 14l3-2" stroke="#efefef" stroke-width="2" fill="none"/></svg>
  <div class="ws"><div class="on"><svg class="i16"><use href="#globe"/></svg></div><div></div><div></div><div></div></div>
</footer>
</body>
</html>
```
FILE: styles.css
```css
* { box-sizing: border-box; }
body { margin: 0; width: 1600px; height: 900px; overflow: hidden; display: flex; flex-direction: column; background: #f2f1f0; font-family: "Noto Sans", "Open Sans", sans-serif; font-size: 14.5px; color: #4a4946; white-space: nowrap; }
svg { display: block; flex: none; }
.defs { position: absolute; }
i { font-style: normal; }
.i10 { width: 10px; height: 10px; }
.i16 { width: 16px; height: 16px; }
.i18 { width: 18px; height: 18px; }
.i20 { width: 20px; height: 20px; }
.i22 { width: 22px; height: 22px; }
.i24 { width: 24px; height: 24px; }
.dn { width: 8px; height: 6px; }

/* desktop panel */
.panel { height: 24px; padding-left: 7px; display: grid; align-items: center; grid-template-columns: 27px 95px 52px 54px 45px 112px 45px 121px 28px 49px 99px 381px 34px 31px 25px 30px 46px 37px 35px 36px 33px 74px 24px 43px 29px 7px; background: linear-gradient(#5c5b54, #3f3e39 95%, #2e2d29); color: #dfdbd2; line-height: 24px; }
.panel .term { width: 22px; height: 18px; }
.panel .bt { width: 12px; height: 18px; }
.panel .kb { width: 22px; height: 14px; }
.panel .bat { width: 24px; height: 14px; }
.panel .mail { width: 18px; height: 13px; }
.panel .grip { width: 5px; height: 10px; }
.usa { font-size: 14px; }
.clock { letter-spacing: -.45px; }

/* window chrome */
.titlebar { height: 29px; flex: none; display: flex; align-items: center; gap: 12px; padding-left: 10px; background: linear-gradient(#6a6962 0, #57564f 1px, #3d3c38 14px, #3c3b37); color: #dfdbd2; font-weight: bold; font-size: 14px; letter-spacing: .04px; }
.wbtns { width: 54px; height: 20px; }
.menubar { height: 25px; flex: none; padding-left: 7px; display: grid; grid-template-columns: 38px 41px 47px 63px 91px 50px 60px; align-items: center; background: #3c3b37; color: #dfdbd2; border-bottom: 1px solid #2f2e2b; line-height: 24px; }
.menubar u { text-underline-offset: 3px; }
.navbar { height: 40px; flex: none; padding: 0 5px 0 6px; display: grid; grid-template-columns: 37px 37px 21px 37px 36px 35px 1052px 10px 325px; align-items: center; }
.urlbar { height: 24px; border: 1px solid #d4572a; box-shadow: inset 0 0 0 1px #f6c9b4; border-radius: 4px; background: #fff; display: flex; align-items: center; padding: 0 4px 0 5px; color: #3c3c3c; }
.vsep { width: 1px; height: 20px; background: #8d8b87; margin: 0 4px; }
.url { flex: 1; letter-spacing: -.06px; }
.caret { display: inline-block; width: 1px; height: 17px; margin-right: -1px; background: #000; vertical-align: -3px; }
.star { margin-right: 9px; }
.search { grid-column: 9; height: 24px; border: 1px solid #a9a7a3; border-radius: 4px; background: #fff; display: flex; align-items: center; padding-right: 2px; color: #a6a5a3; }
.engine { display: flex; align-items: center; gap: 4px; width: 38px; height: 20px; padding-left: 3px; background: #f2f1f0; border-right: 1px solid #8d8b87; margin-right: 3px; }
.search span { flex: 1; }
.bookmarks { height: 31px; margin-bottom: 2px; flex: none; display: grid; grid-template-columns: 18px 89px 25px 17px 116px 18px 115px 10px; align-items: center; padding-left: 6px; }
.tabs { height: 26px; flex: none; display: flex; }
.tab { width: 250px; border: 1px solid #a9a7a3; border-bottom: 0; border-radius: 4px 4px 0 0; background: linear-gradient(#fff, #f4f3f2); display: flex; align-items: center; gap: 4px; padding-left: 5px; letter-spacing: -.35px; }
.tabrest { flex: 1; display: flex; align-items: center; justify-content: space-between; padding: 0 10px 0 8px; border-bottom: 1px solid #8d8b87; }

/* application */
.app { height: 675px; flex: none; background: #4a4747; position: relative; font-family: "Liberation Sans", Arial, sans-serif; font-size: 11px; }
.banner { height: 56px; position: relative; }
.swoosh { position: absolute; left: 0; top: 0; width: 570px; height: 56px; }
.strip { position: relative; height: 16px; margin: 0 3px; padding-left: 409px; border-radius: 5px; background: linear-gradient(100deg, rgba(255,230,160,.3) 546px, rgba(255,255,255,.15) 556px); display: grid; grid-template-columns: 13px 845px 239px 12px 80px; align-items: center; line-height: 16px; color: #fff; }
.mailaddr { letter-spacing: -.12px; }
.links { color: #bdbbbb; letter-spacing: -.03px; line-height: 14px; margin-top: -2px; }
.logout { color: #f39a33; line-height: 14px; margin-top: -2px; }
.brand { position: relative; height: 40px; display: grid; grid-template-columns: 1263px 50px 31px 80px; padding: 2px 0 0 166px; align-items: center; color: #fff; }
.org { font-size: 18px; }
.online { font-weight: bold; font-size: 12px; letter-spacing: -.15px; }
.online i { color: #f39a33; }
.grid9 { width: 23px; height: 23px; margin-top: -1px; }
.sigmah { font-family: Lato, sans-serif; font-weight: bold; font-size: 25px; line-height: 30px; letter-spacing: -.4px; margin-top: -3px; }
.worktabs { height: 34px; border-left: 15px solid #ea7000; margin-right: 15px; display: flex; align-items: flex-end; padding-left: 1px; background: repeating-linear-gradient(127deg, transparent 0 10px, rgba(150,150,155,.2) 11px 13px, transparent 14.4px), linear-gradient(#29292b, #2e2e30 55%, #66696d) padding-box; }
.wt { display: flex; align-items: center; border-radius: 4px 4px 0 0; font-size: 12px; }
.home { width: 145px; height: 30px; padding-left: 9px; color: #b5b3b3; background: repeating-linear-gradient(127deg, transparent 0 10px, rgba(200,200,200,.13) 11px 13px, transparent 14.4px), linear-gradient(rgba(130,130,130,.5) 0 60%, rgba(70,70,70,.5) 60%, rgba(170,170,170,.75)); }
.home i { width: 1px; height: 22px; background: #000; margin: 0 6px; }
.home span { letter-spacing: .27px; margin-top: -3px; }
.house { width: 14px; height: 16px; fill: #e0e0e0; margin-top: -2px; }
.cur { width: 64px; height: 33px; margin-left: 3px; padding: 0 4px 0 11px; justify-content: space-between; color: #fff; background: linear-gradient(#757273 0 48%, #4a4747 48%); }
.scroll { margin-left: auto; display: flex; align-self: center; width: 40px; height: 34px; border: 1px solid #3b3939; border-radius: 4px; background: linear-gradient(#757273 0 48%, #5a5758 48%); }
.scroll svg { width: 19px; height: 32px; }
.scroll svg + svg { border-left: 1px solid #999; }

.toprow { padding: 10px 17px 0 15px; display: flex; gap: 5px; height: 107px; }
.toprow section { width: 1313px; }
.toprow .amend { width: 250px; }
h2 { margin: 0; height: 24px; line-height: 25px; padding-left: 5px; font-size: 11px; color: #4e2b14; background: linear-gradient(#bc9c69 0 11px, #a78d60 11px); letter-spacing: .06px; }
.amend h2 { letter-spacing: .12px; }
.body { background: #fff; height: 73px; margin-right: 2px; }
.proj { padding: 10px 0 0 16px; }
.proj svg { width: 50px; height: 50px; }
.amend .body { padding: 4px; }
.line { display: flex; gap: 4px; }
.combo { width: 150px; height: 22px; border: 1px solid #b9ada6; font-size: 12px; line-height: 20px; padding-top: 1px; display: flex; align-items: center; justify-content: space-between; padding-left: 4px; color: #333; background: linear-gradient(#eceff0, #fff 5px); letter-spacing: .1px; }
.combo b { width: 18px; height: 20px; margin-top: -1px; border-left: 1px solid #b9ada6; background: #e2e2e2; display: grid; place-items: center; }
.combo svg { width: 9px; height: 6px; }
.btn { width: 49px; height: 23px; border: 1px solid #ccc; border-radius: 3px; background: linear-gradient(#fafafa 50%, #ececec 50%); color: #999; text-align: center; line-height: 22px; }
.amend a { display: block; font-weight: bold; text-decoration: underline; color: #43341f; line-height: 17px; margin-top: 1px; letter-spacing: .04px; }

.sub { height: 28px; display: grid; grid-template-columns: 111px 46px 84px 113px 103px 51px 130px; padding-left: 15px; line-height: 29px; color: #fff; font-weight: bold; }
.sub a { text-decoration: underline; justify-self: start; }
.sub .on { text-decoration: none; }
.sub .w1 { letter-spacing: .1px; }
.sub .w2 { letter-spacing: .05px; }
.work { padding-left: 15px; display: flex; gap: 5px; height: 438px; }
.gridpanel { width: 1188px; background: #fff; }
.toolbar { height: 26px; background: #e6d1a2; padding-left: 5px; display: grid; grid-template-columns: 21px 63px 17px 151px 96px 61px 19px 120px; align-items: center; color: #6f6040; line-height: 24px; }
.toolbar span { padding-top: 2px; }
.tight { letter-spacing: -.05px; }
.tri { width: 5px; height: 3px; }
.ref { width: 12px; height: 14px; }
.row { width: 727px; height: 21px; display: grid; grid-template-columns: 501px 76px 75px 75px; line-height: 20px; border: 1px solid #ededed; border-top: 0; color: #544636; }
.row > span { padding: 2px 0 0 5px; height: 20px; line-height: 18px; display: flex; align-items: center; }
.row > .g { padding-left: 6px; gap: 7px; color: #111; }
.g svg { width: 7px; height: 7px; margin-top: -1px; }
.row > .n { padding-left: 40px; gap: 7px; color: #000; }
.n svg { width: 12px; height: 12px; margin-top: -1px; }
.n u { letter-spacing: -.04px; }
.dim svg { opacity: .4; }
.row > .r { justify-content: flex-end; padding-right: 6px; }
.head { width: 1188px; background: #efe0c0; border: 0; border-bottom: 1px solid #b39b6c; }
.head > span { padding: 0 0 0 6px; line-height: 20px; border-right: 1px solid #b39b6c; box-shadow: 1px 0 0 #fff; }
.head > span:first-child { padding-left: 7px; }
.head > span:last-child { box-shadow: none; }

/* map */
.side { width: 375px; display: flex; flex-direction: column; }
.mtabs { height: 21px; display: flex; gap: 2px; padding-left: 2px; line-height: 21px; text-align: center; }
.mtabs b { width: 48px; background: #fff; border-radius: 4px 4px 0 0; color: #4f3d20; }
.mtabs span { width: 44px; border-radius: 4px 4px 0 0; background: linear-gradient(#d9d7d8 0 50%, #cbc9ca 50%); color: #443; }
.mapbox { background: #fff; padding: 4px 1px 1px; }
.map { width: 373px; height: 387px; font-family: "Liberation Sans", Arial, sans-serif; overflow: hidden; }
.border { fill: none; stroke: #b5b5b5; stroke-width: 3.500; stroke-dasharray: 14 4 30 5; }
.roads { fill: none; stroke: #e9d68c; stroke-width: 9; stroke-linejoin: round; stroke-linecap: round; }
.roads .core { stroke: #fbec8e; stroke-width: 5.500; }
.highway { stroke: #e9a638; stroke-width: 10.500; }
.highway .core { stroke: #fbb545; stroke-width: 7; }
.motorway { stroke: #dd7a30; stroke-width: 11.500; }
.motorway .core { stroke: #f08a3c; stroke-width: 7.500; }
.shield { stroke-width: 3; }
.grn { fill: #62b345; stroke: #3f8a2c; }
.red { fill: #fa5252; stroke: #b83030; }
.sht { fill: #fff; font-size: 29px; font-weight: bold; text-anchor: middle; }
.town { font-size: 30px; fill: #1c1210; stroke: #fff; stroke-width: 5; stroke-opacity: .7; paint-order: stroke; }
.town .mid { font-size: 32px; }
.town .big { font-size: 36px; }
.park { fill: #2d5c38; }
.pow { font-size: 20px; fill: #444; }
.ggl { font-family: "Liberation Serif", serif; font-size: 68px; stroke: #777; stroke-width: .8; }
.copy { font-size: 33px; fill: #7777cc; stroke: none; }
.copy path { stroke: #7777cc; stroke-width: 3; }
.copy .dash { fill: #000; }
.mfoot { height: 25px; line-height: 25px; padding-left: 8px; background: #e6d1a2; color: #544636; }
.cursor { position: absolute; left: 633px; top: 418px; width: 13px; height: 20px; }

/* status and task bars */
.status { height: 24px; flex: none; display: flex; align-items: center; justify-content: space-between; padding: 0 6px 3px 8px; border-top: 1px solid #c9c7c3; }
.taskbar { height: 24px; flex: none; display: flex; align-items: center; background: linear-gradient(#5c5b54, #3f3e39 95%, #2e2d29); color: #dfdbd2; }
.hdl { width: 11px; height: 24px; border-right: 1px solid #3a3935; }
.task { width: 202px; height: 24px; display: flex; align-items: center; gap: 8px; padding-left: 7px; border-right: 1px solid #3a3935; line-height: 23px; }
.t3 { letter-spacing: .12px; }
.t4 { letter-spacing: -.28px; }
.active { background: #363531; }
.trash { width: 20px; height: 22px; margin-left: 117px; }
.ws { margin-left: auto; display: flex; }
.ws div { width: 40px; height: 24px; background: #343330; border-right: 1px solid #5c5b54; }
.ws .on { background: #ffb094; border: 1px solid #fff; border-top-color: #d4572a; display: grid; place-items: center; }
```
